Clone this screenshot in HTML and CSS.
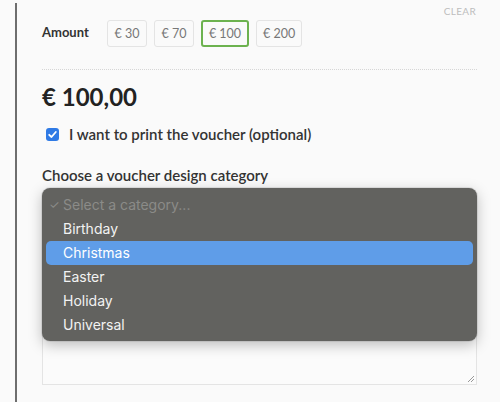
FILE: index.html
```html
<!DOCTYPE html>
<html>
<head>
<meta charset="utf-8">
<link rel="stylesheet" href="styles.css">
</head>
<body>
<div class="panel">
  <div class="clear-row"><span class="clear">CLEAR</span></div>
  <div class="amount-row">
    <span class="amount-label">Amount</span>
    <div class="amounts">
      <button class="amt">€ 30</button>
      <button class="amt">€ 70</button>
      <button class="amt active">€ 100</button>
      <button class="amt">€ 200</button>
    </div>
  </div>
  <div class="divider"></div>
  <div class="price">€ 100,00</div>
  <label class="check-row">
    <span class="checkbox">
      <svg viewBox="0 0 13 13" width="13" height="13"><path d="M3.2 6.8 L5.5 9 L9.8 4" fill="none" stroke="#fff" stroke-width="1.8" stroke-linecap="round" stroke-linejoin="round"/></svg>
    </span>
    <span class="check-text">I want to print the voucher (optional)</span>
  </label>
  <div class="field-label">Choose a voucher design category</div>
  <div class="select-wrap">
    <div class="select-closed"></div>
    <ul class="menu">
      <li class="opt placeholder"><span class="tick">✓</span>Select a category...</li>
      <li class="opt">Birthday</li>
      <li class="opt selected">Christmas</li>
      <li class="opt">Easter</li>
      <li class="opt">Holiday</li>
      <li class="opt">Universal</li>
    </ul>
  </div>
  <div class="textarea">
    <svg class="grip" viewBox="0 0 8 8" width="8" height="8"><path d="M1 7 L7 1 M4 7 L7 4" stroke="#999" stroke-width="1" fill="none"/></svg>
  </div>
</div>
</body>
</html>
```
FILE: styles.css
```css
html, body {
  margin: 0;
  padding: 0;
  background: #fafafa;
  font-family: Lato, "Open Sans", sans-serif;
  color: #333;
}
.panel {
  margin-left: 15px;
  width: 435px;
  min-height: 402px;
  border-left: 2px solid #6e6e6e;
  padding-left: 25px;
  box-sizing: content-box;
}
.clear-row {
  margin-top: 3px;
  height: 12px;
  line-height: 12px;
  text-align: right;
  padding-right: 1px;
}
.clear {
  font-size: 10px;
  color: #bdbdbd;
  letter-spacing: 0.3px;
}
.amount-row {
  margin-top: 5px;
  display: flex;
  align-items: center;
  height: 27px;
}
.amount-label {
  width: 65px;
  font-size: 13px;
  font-weight: 700;
  color: #333;
  position: relative;
  top: -2px;
}
.amounts {
  display: flex;
  gap: 7px;
}
.amt {
  height: 27px;
  padding: 0 6px;
  min-width: 40px;
  border: 1px solid #e4e4e4;
  border-radius: 3px;
  background: #fafafa;
  font-family: Lato, sans-serif;
  font-size: 12.5px;
  color: #777;
  box-sizing: border-box;
}
.amt.active {
  border: 2px solid #6cb24f;
  padding: 0 5px;
  min-width: 48px;
}
.divider {
  margin-top: 22px;
  border-top: 1px dotted #d6d6d6;
}
.price {
  margin-top: 12px;
  font-size: 24px;
  line-height: 30px;
  font-weight: 700;
  color: #222;
}
.check-row {
  margin-top: 12px;
  display: flex;
  align-items: center;
  height: 20px;
}
.checkbox {
  width: 13px;
  height: 13px;
  margin-left: 4px;
  margin-right: 10px;
  border-radius: 3px;
  background: #2f7ae5;
  display: flex;
}
.check-text {
  font-size: 15px;
  font-weight: 600;
  color: #333;
}
.field-label {
  margin-top: 21px;
  font-size: 15px;
  line-height: 20px;
  font-weight: 600;
  color: #333;
}
.select-wrap {
  margin-top: 3px;
  position: relative;
}
.select-closed {
  height: 30px;
}
.menu {
  position: absolute;
  top: 0;
  left: 0;
  right: 0;
  margin: 0;
  padding: 5px 4px 4px;
  list-style: none;
  background: #62625f;
  border-radius: 8px;
  box-shadow: 0 4px 14px rgba(0,0,0,0.25), 0 0 0 1px rgba(0,0,0,0.08);
  font-family: Inter, "Liberation Sans", sans-serif;
  z-index: 2;
}
.opt {
  height: 24px;
  line-height: 24px;
  padding-left: 17px;
  font-size: 14px;
  color: #f2f2f2;
  border-radius: 5px;
  position: relative;
}
.opt.placeholder {
  color: #8b8b88;
}
.tick {
  position: absolute;
  left: 3px;
  font-size: 12px;
}
.opt.selected {
  background: #5f9de8;
  color: #fff;
}
.textarea {
  margin-top: 111px;
  height: 54px;
  border: 1px solid #e4e4e4;
  background: #fbfbfb;
  position: relative;
}
.grip {
  position: absolute;
  right: 1px;
  bottom: 1px;
}
```
